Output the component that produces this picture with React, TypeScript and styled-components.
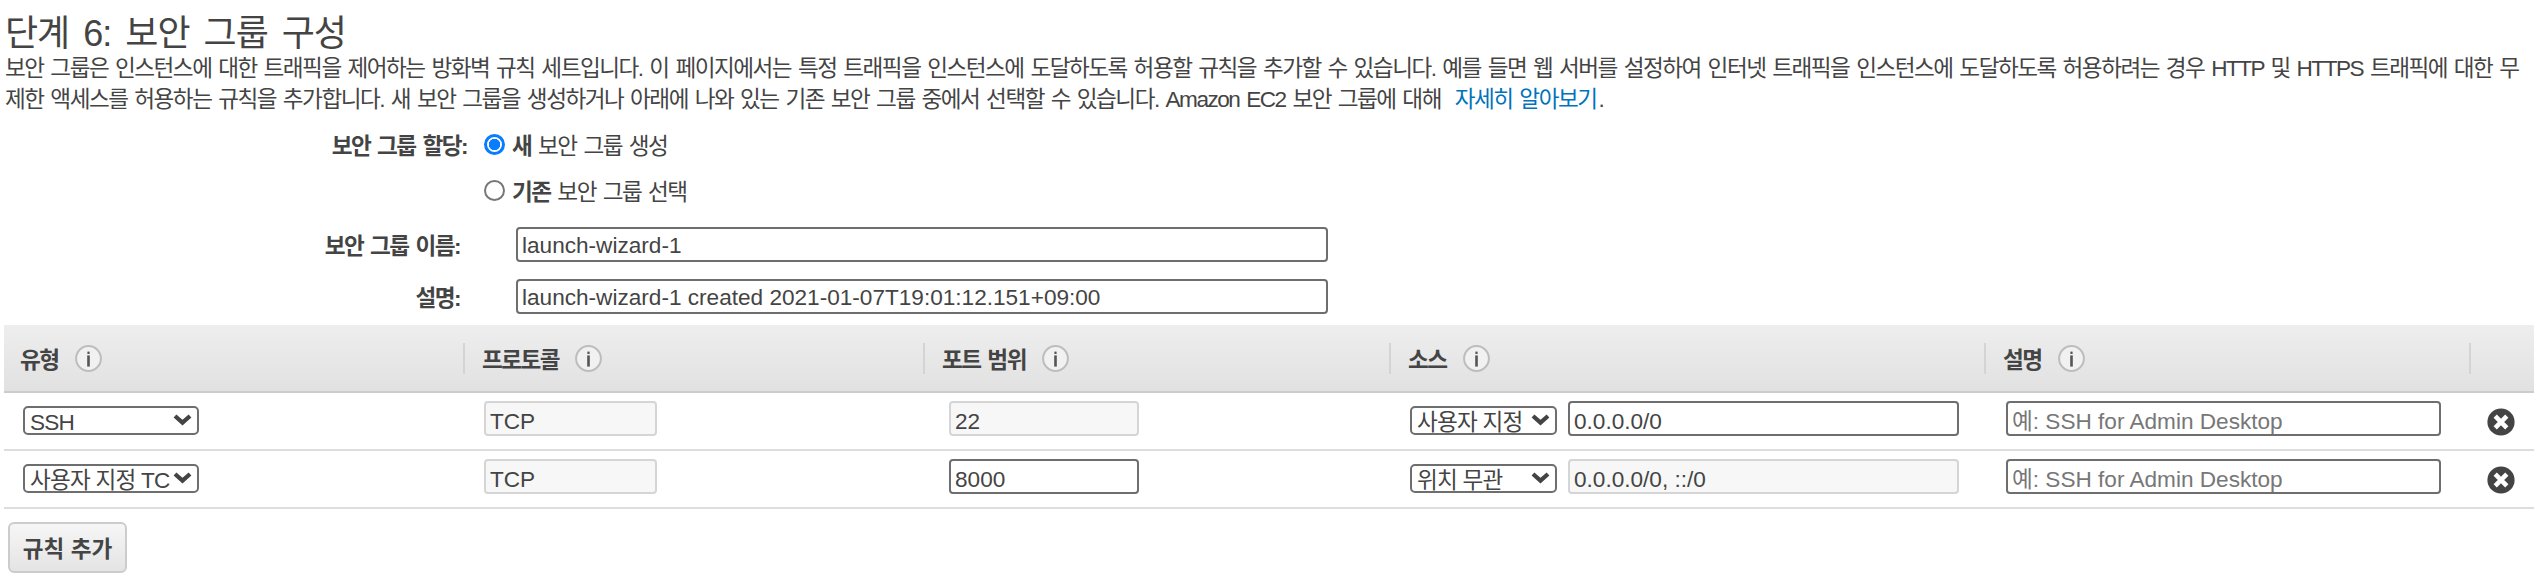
import styled, { createGlobalStyle } from 'styled-components';

const GlobalStyle = createGlobalStyle`
  html, body {
    margin: 0;
    padding: 0;
    background: #fff;
  }
  body {
    font-family: 'Liberation Sans', 'Noto Sans CJK KR', sans-serif;
    font-size: 22.6px;
    letter-spacing: -1.5px;
    word-spacing: 2px;
    color: #444;
  }
`;

const rules = [
  { type: 'SSH', port: '22', portLocked: true, source: '사용자 지정', cidr: '0.0.0.0/0', cidrLocked: false },
  { type: '사용자 지정 TCP', port: '8000', portLocked: false, source: '위치 무관', cidr: '0.0.0.0/0, ::/0', cidrLocked: true },
];

const columns = ['유형', '프로토콜', '포트 범위', '소스', '설명'];

function InfoIcon() {
  return (
    <svg width='27' height='27' viewBox='0 0 27 27'>
      <circle cx='13.5' cy='13.5' r='12.4' fill='#f1f1f1' stroke='#bdbdbd' strokeWidth='2' />
      <rect x='12.4' y='6.6' width='2.2' height='2.4' fill='#555' />
      <rect x='12.2' y='10.4' width='2.6' height='11.2' fill='#555' />
    </svg>
  );
}

function RemoveIcon() {
  return (
    <svg width='28' height='28' viewBox='0 0 28 28'>
      <circle cx='14' cy='14' r='13.6' fill='#444' />
      <path d='M8.2 8.2 L19.8 19.8 M19.8 8.2 L8.2 19.8' stroke='#fff' strokeWidth='4.6' />
    </svg>
  );
}

function Chevron() {
  return (
    <svg width='19' height='12' viewBox='0 0 19 12'>
      <path d='M2 2 L9.5 8.6 L17 2' fill='none' stroke='#444' strokeWidth='4.2' />
    </svg>
  );
}

function Dropdown({ width, value, options }: { width: number; value: string; options: string[] }) {
  return (
    <SelectWrap $width={width}>
      <Select defaultValue={value}>
        {options.map((option) => (
          <option key={option}>{option}</option>
        ))}
      </Select>
      <ChevronSlot>
        <Chevron />
      </ChevronSlot>
    </SelectWrap>
  );
}

export default function App() {
  return (
    <Page>
      <GlobalStyle />
      <Title>단계 6: 보안 그룹 구성</Title>
      <Intro>
        보안 그룹은 인스턴스에 대한 트래픽을 제어하는 방화벽 규칙 세트입니다. 이 페이지에서는 특정 트래픽을 인스턴스에 도달하도록 허용할 규칙을 추가할 수 있습니다. 예를 들면 웹 서버를 설정하여 인터넷 트래픽을 인스턴스에 도달하도록 허용하려는 경우 HTTP 및 HTTPS 트래픽에 대한 무
        <br />
        제한 액세스를 허용하는 규칙을 추가합니다. 새 보안 그룹을 생성하거나 아래에 나와 있는 기존 보안 그룹 중에서 선택할 수 있습니다. Amazon EC2 보안 그룹에 대해 <DocLink href='#'>자세히 알아보기</DocLink>.
      </Intro>

      <Form>
        <RadioRow>
          <FieldLabel $width={467}>보안 그룹 할당:</FieldLabel>
          <RadioOption>
            <Radio type='radio' name='assign' defaultChecked />
            <span><b>새</b> 보안 그룹 생성</span>
          </RadioOption>
        </RadioRow>
        <RadioRow $top={16}>
          <FieldLabel $width={467} />
          <RadioOption>
            <Radio type='radio' name='assign' />
            <span><b>기존</b> 보안 그룹 선택</span>
          </RadioOption>
        </RadioRow>
        <InputRow $top={22}>
          <FieldLabel $width={460}>보안 그룹 이름:</FieldLabel>
          <TextInput $width={812} defaultValue='launch-wizard-1' />
        </InputRow>
        <InputRow $top={17}>
          <FieldLabel $width={460}>설명:</FieldLabel>
          <TextInput $width={812} defaultValue='launch-wizard-1 created 2021-01-07T19:01:12.151+09:00' />
        </InputRow>
      </Form>

      <Table>
        <HeaderRow>
          {columns.map((column) => (
            <HeaderCell key={column}>
              {column}
              <InfoIcon />
            </HeaderCell>
          ))}
          <HeaderCell />
        </HeaderRow>
        {rules.map((rule) => (
          <Row key={rule.type}>
            <Cell $inset={19}>
              <Dropdown width={176} value={rule.type} options={[rule.type]} />
            </Cell>
            <Cell $inset={21}>
              <CellInput $width={173} $locked readOnly value='TCP' />
            </Cell>
            <Cell $inset={26}>
              <CellInput $width={190} $locked={rule.portLocked} readOnly={rule.portLocked} defaultValue={rule.port} />
            </Cell>
            <Cell $inset={21}>
              <Dropdown width={147} value={rule.source} options={[rule.source]} />
              <CellInput $width={391} $locked={rule.cidrLocked} readOnly={rule.cidrLocked} defaultValue={rule.cidr} />
            </Cell>
            <Cell $inset={22}>
              <CellInput $width={435} placeholder='예: SSH for Admin Desktop' />
            </Cell>
            <RemoveCell>
              <RemoveIcon />
            </RemoveCell>
          </Row>
        ))}
      </Table>

      <AddButton type='button'>규칙 추가</AddButton>
    </Page>
  );
}

const Page = styled.div`
  width: 2540px;
  height: 584px;
  overflow: hidden;
  box-sizing: border-box;
  padding-top: 15px;
`;

const Title = styled.h1`
  margin: 0 0 0 5px;
  font-size: 36px;
  line-height: 38px;
  font-weight: 400;
  letter-spacing: -1px;
  word-spacing: 5px;
  color: #444;
`;

const Intro = styled.p`
  margin: 0 0 0 5px;
  line-height: 31px;
  white-space: nowrap;
`;

const DocLink = styled.a`
  margin-left: 7px;
  margin-right: 2px;
  color: #0073bb;
  text-decoration: none;
`;

const Form = styled.div`
  margin-top: 14px;
`;

const RadioRow = styled.div<{ $top?: number }>`
  display: flex;
  align-items: center;
  height: 30px;
  margin-top: ${(p) => p.$top ?? 0}px;
  gap: 16px;
`;

const InputRow = styled.div<{ $top: number }>`
  display: flex;
  align-items: center;
  gap: 56px;
  margin-top: ${(p) => p.$top}px;
`;

const FieldLabel = styled.label<{ $width: number }>`
  width: ${(p) => p.$width}px;
  flex: none;
  text-align: right;
  font-weight: 700;
`;

const RadioOption = styled.label`
  display: flex;
  align-items: center;
  gap: 7px;
`;

const Radio = styled.input`
  appearance: none;
  flex: none;
  width: 21px;
  height: 21px;
  margin: 0 0 0 1px;
  border-radius: 50%;
  border: 2px solid #777;
  background: #fff;

  &:checked {
    border: 3px solid #0a7cff;
    background: radial-gradient(circle, #0a7cff 0 5.4px, #fff 6px);
  }
`;

const TextInput = styled.input<{ $width: number; $locked?: boolean }>`
  width: ${(p) => p.$width}px;
  height: 35px;
  flex: none;
  box-sizing: border-box;
  margin: 0;
  padding: 2px 4px 0;
  font: inherit;
  letter-spacing: 0;
  word-spacing: 0;
  color: #444;
  outline: none;
  border-radius: 4px;
  border: 2px solid ${(p) => (p.$locked ? '#d5d5d5' : '#6e6e6e')};
  background: ${(p) => (p.$locked ? '#f7f7f7' : '#fff')};

  &::placeholder {
    color: #777;
    opacity: 1;
  }
`;

const CellInput = styled(TextInput)`
  padding-top: 6px;
`;

const Table = styled.div`
  margin: 11px 6px 0 4px;
`;

const gridColumns = '459px 460px 466px 595px 485px 65px';

const HeaderRow = styled.div`
  display: grid;
  grid-template-columns: ${gridColumns};
  align-items: center;
  height: 68px;
  box-sizing: border-box;
  border-bottom: 2px solid #ccc;
  background: linear-gradient(#eeeeee, #e1e1e1);
`;

const HeaderCell = styled.div`
  display: flex;
  align-items: center;
  gap: 16px;
  height: 31px;
  padding-left: 17px;
  border-left: 2px solid #d4d4d4;
  font-weight: 700;

  &:first-child {
    border-left: none;
    padding-left: 16px;
  }
`;

const Row = styled.div`
  display: grid;
  grid-template-columns: ${gridColumns};
  height: 58px;
  box-sizing: border-box;
  padding-top: 8px;
  border-bottom: 2px solid #ddd;
`;

const Cell = styled.div<{ $inset: number }>`
  display: flex;
  align-items: flex-start;
  gap: 11px;
  padding-left: ${(p) => p.$inset}px;
`;

const RemoveCell = styled.div`
  display: flex;
  padding: 7px 0 0 18px;
`;

const SelectWrap = styled.div<{ $width: number }>`
  position: relative;
  flex: none;
  width: ${(p) => p.$width}px;
  height: 29px;
  margin-top: 5px;
`;

const Select = styled.select`
  appearance: none;
  display: block;
  width: 100%;
  height: 100%;
  box-sizing: border-box;
  margin: 0;
  padding: 2px 26px 0 5px;
  font: inherit;
  letter-spacing: -0.8px;
  color: #444;
  background: #fff;
  border: 2px solid #6e6e6e;
  border-radius: 5px;
  outline: none;
`;

const ChevronSlot = styled.span`
  position: absolute;
  top: 8px;
  right: 7px;
  display: flex;
  pointer-events: none;
`;

const AddButton = styled.button`
  display: block;
  width: 119px;
  height: 51px;
  margin: 13px 0 0 8px;
  padding: 0;
  font: inherit;
  font-weight: 700;
  color: #444;
  border: 2px solid #ccc;
  border-radius: 6px;
  background: linear-gradient(#f6f6f6, #e4e4e4);
`;
